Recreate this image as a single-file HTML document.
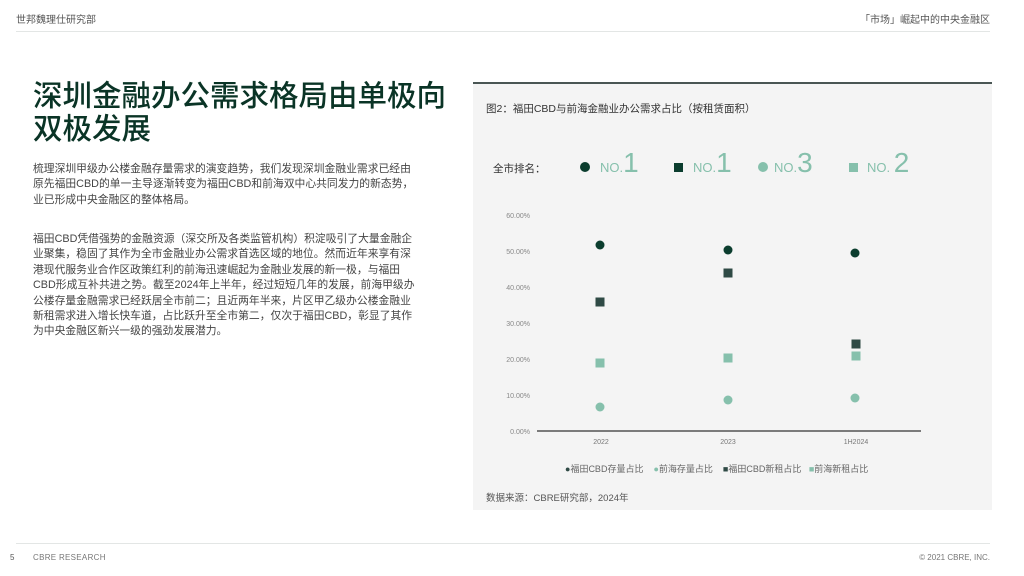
<!DOCTYPE html>
<html><head><meta charset="utf-8"><style>
*{margin:0;padding:0;box-sizing:border-box}
body{width:1024px;height:576px;background:#fff;position:relative;overflow:hidden;font-family:"Liberation Sans","Noto Sans CJK SC",sans-serif;color:#333}
.a{position:absolute;white-space:nowrap}
.p{font-size:10.8px;line-height:15.4px;color:#444;white-space:nowrap}
</style></head><body>
<div class="a" style="left:16px;top:11px;font-size:10px;color:#555">世邦魏理仕研究部</div>
<div class="a" style="right:34px;top:11px;font-size:10px;color:#555">「市场」崛起中的中央金融区</div>
<div class="a" style="left:16px;top:31px;width:974px;height:1px;background:#e3e6e5"></div>

<div class="a" style="left:33px;top:80px;font-size:29.5px;line-height:33px;color:#0a3426;font-weight:500">深圳金融办公需求格局由单极向<br>双极发展</div>

<div class="a p" style="left:33px;top:162px">梳理深圳甲级办公楼金融存量需求的演变趋势，我们发现深圳金融业需求已经由<br>原先福田CBD的单一主导逐渐转变为福田CBD和前海双中心共同发力的新态势，<br>业已形成中央金融区的整体格局。</div>
<div class="a p" style="left:33px;top:232px">福田CBD凭借强势的金融资源（深交所及各类监管机构）积淀吸引了大量金融企<br>业聚集，稳固了其作为全市金融业办公需求首选区域的地位。然而近年来享有深<br>港现代服务业合作区政策红利的前海迅速崛起为金融业发展的新一极，与福田<br>CBD形成互补共进之势。截至2024年上半年，经过短短几年的发展，前海甲级办<br>公楼存量金融需求已经跃居全市前二；且近两年半来，片区甲乙级办公楼金融业<br>新租需求进入增长快车道，占比跃升至全市第二，仅次于福田CBD，彰显了其作<br>为中央金融区新兴一级的强劲发展潜力。</div>

<div class="a" style="left:473px;top:82px;width:519px;height:428px;background:#f4f4f4;border-top:2px solid #4a5654"></div>
<div class="a" style="left:486px;top:101px;font-size:10.5px;color:#333">图2：福田CBD与前海金融业办公需求占比（按租赁面积）</div>

<div class="a" style="left:493px;top:161px;font-size:10.5px;color:#333">全市排名：</div>
<div class="a" style="left:580px;top:162px;width:10px;height:10px;border-radius:50%;background:#0b3d2e"></div>
<div class="a" style="left:600px;top:148px;color:#86c0ac;font-size:13px;line-height:30px">NO.<span style="font-size:28px">1</span></div>
<div class="a" style="left:674px;top:163px;width:9px;height:9px;background:#0b3d2e"></div>
<div class="a" style="left:693px;top:148px;color:#86c0ac;font-size:13px;line-height:30px">NO.<span style="font-size:28px">1</span></div>
<div class="a" style="left:758px;top:162px;width:10px;height:10px;border-radius:50%;background:#86c0ac"></div>
<div class="a" style="left:774px;top:148px;color:#86c0ac;font-size:13px;line-height:30px">NO.<span style="font-size:28px">3</span></div>
<div class="a" style="left:849px;top:163px;width:9px;height:9px;background:#86c0ac"></div>
<div class="a" style="left:867px;top:148px;color:#86c0ac;font-size:13px;line-height:30px">NO. <span style="font-size:28px">2</span></div>

<svg class="a" style="left:473px;top:200px" width="519" height="250">
<g font-family="Liberation Sans" font-size="7" fill="#888" text-anchor="end">
<text x="57" y="18">60.00%</text><text x="57" y="54">50.00%</text><text x="57" y="90">40.00%</text><text x="57" y="126">30.00%</text><text x="57" y="162">20.00%</text><text x="57" y="198">10.00%</text><text x="57" y="234">0.00%</text>
</g>
<line x1="64" y1="231" x2="448" y2="231" stroke="#333" stroke-width="1.2"/>
<g font-family="Liberation Sans" font-size="7" fill="#777" text-anchor="middle"><text x="128" y="244">2022</text><text x="255" y="244">2023</text><text x="383" y="244">1H2024</text></g>
<g fill="#0b3d2e"><circle cx="127" cy="45" r="4.5"/><circle cx="255" cy="50" r="4.5"/><circle cx="382" cy="53" r="4.5"/></g>
<g fill="#2f4a45"><rect x="122.5" y="97.5" width="9" height="9"/><rect x="250.5" y="68.5" width="9" height="9"/><rect x="378.5" y="139.5" width="9" height="9"/></g>
<g fill="#86c0ac"><rect x="122.5" y="158.5" width="9" height="9"/><rect x="250.5" y="153.5" width="9" height="9"/><rect x="378.5" y="151.5" width="9" height="9"/></g>
<g fill="#86c0ac"><circle cx="127" cy="207" r="4.5"/><circle cx="255" cy="200" r="4.5"/><circle cx="382" cy="198" r="4.5"/></g>
</svg>

<div class="a" style="left:565px;top:462px;font-size:9px;color:#666">
<span style="color:#2f4a45">●</span>福田CBD存量占比&nbsp;&nbsp;&nbsp;&nbsp;<span style="color:#86c0ac">●</span>前海存量占比&nbsp;&nbsp;&nbsp;&nbsp;<span style="color:#2f4a45">■</span>福田CBD新租占比&nbsp;&nbsp;&nbsp;<span style="color:#86c0ac">■</span>前海新租占比</div>
<div class="a" style="left:486px;top:490px;font-size:9.5px;color:#555">数据来源：CBRE研究部，2024年</div>

<div class="a" style="left:16px;top:543px;width:974px;height:1px;background:#e3e6e5"></div>
<div class="a" style="left:10px;top:553px;font-size:8px;color:#555">5</div>
<div class="a" style="left:33px;top:553px;font-size:8px;color:#777;letter-spacing:.3px">CBRE RESEARCH</div>
<div class="a" style="right:34px;top:553px;font-size:8px;color:#777">© 2021 CBRE, INC.</div>
</body></html>
